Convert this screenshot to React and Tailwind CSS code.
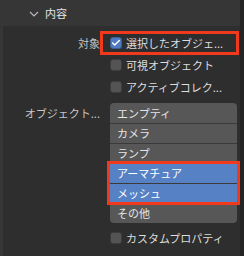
import { Check } from 'lucide-react';

const font = { fontFamily: '"Noto Sans CJK JP", "Noto Sans", sans-serif' };

const Checkbox = ({ checked }) => (
  <div
    className={`w-[12px] h-[12px] rounded-[3px] flex items-center justify-center shrink-0 border ${
      checked ? 'bg-[#4f7bc0] border-[#3a5f96]' : 'bg-[#545454] border-[#3c3c3c]'
    }`}
  >
    {checked && <Check className="w-[10px] h-[10px] text-white" strokeWidth={3.5} />}
  </div>
);

const CheckRow = ({ label, text, checked, boxed }) => (
  <div className="relative flex items-center h-[22px]">
    <div className="w-[100px] text-right text-[11px] text-[#c6c6c6] pr-0">{label}</div>
    <div className="ml-[10px] flex items-center gap-[4px] text-[11px] text-[#dedede] whitespace-nowrap">
      <Checkbox checked={checked} />
      <span>{text}</span>
    </div>
    {boxed && (
      <div className="absolute left-[100px] right-[1px] top-[-1px] bottom-[-1px] border-[3px] border-[#f0391d]" />
    )}
  </div>
);

const items = [
  { name: 'エンプティ' },
  { name: 'カメラ' },
  { name: 'ランプ' },
];

const App = () => {
  return (
    <div className="w-[244px] h-[256px] bg-[#2b2b2b] flex overflow-hidden" style={font}>
      <div className="w-[3px] bg-[#363636] shrink-0" />
      <div className="flex-1 flex flex-col bg-[#2e2e2e]">
        {/* Header */}
        <div className="h-[26px] bg-[#363636] flex items-center pl-[26px] gap-[6px] text-[11px] text-[#e2e2e2]">
          <svg width="10" height="6" viewBox="0 0 10 6" className="mt-[1px]">
            <path d="M1 1 L5 5 L9 1" fill="none" stroke="#bdbdbd" strokeWidth="1.1" />
          </svg>
          <span>内容</span>
        </div>

        <div className="flex flex-col pt-[6px] -ml-[3px]">
          <CheckRow label="対象" text="選択したオブジェ..." checked boxed />
          <CheckRow label="" text="可視オブジェクト" />
          <CheckRow label="" text="アクティブコレク..." />

          <div className="flex mt-[5px]">
            <div className="w-[100px] text-right text-[11px] text-[#c6c6c6] h-[20px] flex items-center justify-end">
              オブジェクト...
            </div>
            <div className="ml-[10px] w-[127px] flex flex-col text-[11px] text-[#e6e6e6]">
              <div className="rounded-t-[4px] overflow-hidden flex flex-col">
                {items.map((it, i) => (
                  <div
                    key={it.name}
                    className={`h-[20px] flex items-center pl-[7px] bg-[#575757] ${
                      i > 0 ? 'border-t border-[#3a3a3a]' : ''
                    }`}
                  >
                    {it.name}
                  </div>
                ))}
              </div>
              <div className="relative flex flex-col">
                <div className="h-[20px] flex items-center pl-[7px] bg-[#5681c4] border-t border-[#3a3a3a] text-white">
                  アーマチュア
                </div>
                <div className="h-[20px] flex items-center pl-[7px] bg-[#5681c4] border-t border-[#3a3a3a] text-white">
                  メッシュ
                </div>
                <div className="absolute left-[-3px] right-[-3px] top-[-2px] bottom-[-2px] border-[3px] border-[#f0391d]" />
              </div>
              <div className="h-[20px] flex items-center pl-[7px] bg-[#575757] border-t border-[#3a3a3a] rounded-b-[4px]">
                その他
              </div>
            </div>
          </div>

          <div className="mt-[4px]">
            <CheckRow label="" text="カスタムプロパティ" />
          </div>
        </div>
      </div>
      <div className="w-[4px] bg-[#242424] shrink-0" />
    </div>
  );
};

export default App;
